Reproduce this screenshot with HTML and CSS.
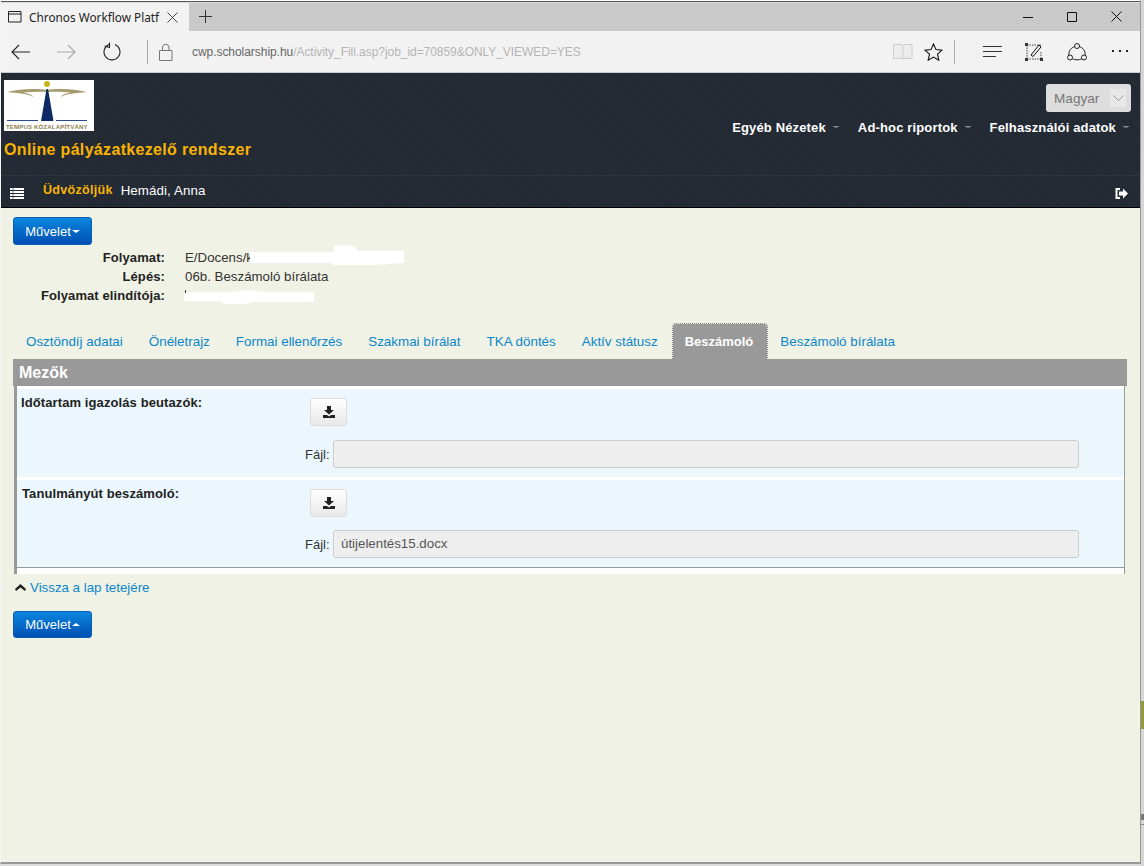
FILE: index.html
```html
<!DOCTYPE html>
<html lang="hu">
<head>
<meta charset="utf-8">
<title>Chronos Workflow Platform</title>
<link rel="stylesheet" href="styles.css">
</head>
<body>
<div class="desktop">
  <div class="window">
    <div class="titlebar">
      <div class="browser-tab">
        <svg class="tab-icon" width="14" height="12" viewBox="0 0 14 12"><path d="M.5.5h12.500v10.500H.5zM.5 3h12.500" fill="none" stroke="#222"/></svg>
        <span class="tab-title">Chronos Workflow Platf</span>
        <svg class="tab-close" width="11" height="11" viewBox="0 0 11 11"><path d="M.5.5l10 10M10.500.5l-10 10" stroke="#444" fill="none"/></svg>
      </div>
      <svg class="new-tab" width="13" height="13" viewBox="0 0 13 13"><path d="M6.500 0v13M0 6.500h13" stroke="#333" fill="none"/></svg>
      <div class="win-controls">
        <svg width="10" height="10" viewBox="0 0 10 10"><path d="M0 5.500h10" stroke="#111"/></svg>
        <svg width="10" height="10" viewBox="0 0 10 10"><path d="M.5.500h9v9h-9z" fill="none" stroke="#111"/></svg>
        <svg width="11" height="11" viewBox="0 0 11 11"><path d="M.5.5l10 10M10.500.5l-10 10" stroke="#111" fill="none"/></svg>
      </div>
    </div>
    <div class="toolbar">
      <svg class="nav-back" width="19" height="16" viewBox="0 0 19 16"><path d="M19 8H1M8 1L1 8l7 7" fill="none" stroke="#222" stroke-width="1.100"/></svg>
      <svg class="nav-forward" width="19" height="16" viewBox="0 0 19 16"><path d="M0 8h18M11 1l7 7-7 7" fill="none" stroke="#aaa" stroke-width="1.100"/></svg>
      <svg class="nav-reload" width="18" height="19" viewBox="0 0 18 19"><path d="M6 2.500A8 8 0 1 0 12 2.500M6.500 0.500L6.500 5.500 1.500 4" fill="none" stroke="#222" stroke-width="1.100"/></svg>
      <span class="tool-sep"></span>
      <svg class="lock" width="14" height="18" viewBox="0 0 14 18"><path d="M.5 7.500h12.500v10H.5zM3.500 7.500V4a3.300 3.300 0 0 1 6.500 0v3.500" fill="none" stroke="#777"/></svg>
      <span class="address"><span class="domain">cwp.scholarship.hu</span>/Activity_Fill.asp?job_id=70859&amp;ONLY_VIEWED=YES</span>
      <svg class="reading" width="20" height="18" viewBox="0 0 20 18"><path d="M.5 1.500h8.500l1 1 1-1h8v14h-8l-1 1-1-1H.5zM10 2.500v13" fill="#ececec" stroke="#ccc"/></svg>
      <svg class="star" width="19" height="18" viewBox="0 0 19 18"><path d="M9.500 1l2.500 5.600 6 .6-4.500 4 1.300 6-5.300-3.100-5.300 3.100 1.300-6-4.500-4 6-.6z" fill="none" stroke="#111" stroke-width="1.100"/></svg>
      <span class="tool-sep tool-sep-right"></span>
      <svg class="hub" width="19" height="11" viewBox="0 0 19 11"><path d="M0 .5h19M0 5.500h19M0 10.500h13" fill="none" stroke="#333"/></svg>
      <svg class="note" width="18" height="18" viewBox="0 0 18 18"><path d="M2 2h14M2 2v14M2 16h14M16 9v7" stroke="#444" stroke-dasharray="1.500 1" fill="none"/><path d="M0 0h3v3H0zM15 15h3v3h-3zM0 15h3v3H0z" fill="#333"/><path d="M6 12L14 2l2 2-8 9.500z" fill="none" stroke="#111"/></svg>
      <svg class="share" width="20" height="18" viewBox="0 0 20 18"><circle cx="10" cy="3" r="2.500" fill="none" stroke="#222"/><circle cx="3" cy="14.500" r="2.500" fill="none" stroke="#222"/><circle cx="17" cy="14.500" r="2.500" fill="none" stroke="#222"/><path d="M7.600 3.700C4 4.600 1.500 8 1.800 12.200M12.400 3.700C16 4.600 18.500 8 18.200 12.200M5.300 15.800c3 1.400 6.400 1.400 9.400 0" fill="none" stroke="#222"/></svg>
      <svg class="more" width="17" height="3" viewBox="0 0 17 3"><path d="M0 0h2v2H0zM7 0h2v2H7zM14 0h2v2h-2z" fill="#222"/></svg>
    </div>
    <header class="site-header">
      <div class="brand-row">
        <div class="brand">
          <div class="logo">
            <svg width="90" height="51" viewBox="0 0 90 51">
              <circle cx="43" cy="4" r="3" fill="#c3b41b"/>
              <path d="M3 12c12-3 28-4 40-2 12-2 28-1 40 2-11 1-22 2-26 5 1-3 6-3.500 10-4.500-9-1-18-1-24-.5-7-.5-15-.5-24 .5 4 1 9 1.500 10 4.500-4-3-15-4-26-5z" fill="#a59a6b"/>
              <path d="M42.500 9h1.500l5.500 32H37z" fill="#0e2a66"/>
              <path d="M3 40.500h31M52 40.500h31" stroke="#2a4a8a"/>
              <text x="2" y="49" class="logo-text">TEMPUS KÖZALAPÍTVÁNY</text>
            </svg>
          </div>
          <div class="system-name">Online pályázatkezelő rendszer</div>
        </div>
        <div class="header-right">
          <div class="lang-select"><span>Magyar</span><span class="lang-arrow"><svg width="11" height="6" viewBox="0 0 11 6"><path d="M.5.500l5 5 5-5" fill="none" stroke="#999"/></svg></span></div>
          <nav class="top-nav">
            <a>Egyéb Nézetek<i class="caret"></i></a>
            <a>Ad-hoc riportok<i class="caret"></i></a>
            <a>Felhasználói adatok<i class="caret"></i></a>
          </nav>
        </div>
      </div>
      <div class="user-row">
        <svg class="list-icon" width="14" height="11" viewBox="0 0 14 11"><path d="M0 0h14v2H0zM0 3h14v2H0zM0 6h14v2H0zM0 9h14v2H0z" fill="#fff"/><path d="M3 0v11" stroke="#222933" stroke-width=".6"/></svg>
        <span class="welcome">Üdvözöljük</span>
        <span class="user-name">Hemádi, Anna</span>
        <svg class="logout" width="13" height="11" viewBox="0 0 13 11"><path d="M5 1H1.500v9H5" fill="none" stroke="#fff" stroke-width="2"/><path d="M4 3.500h4V0.500l5 5-5 5v-3H4z" fill="#fff"/></svg>
      </div>
    </header>
    <main class="content">
      <button class="action-btn action-btn-top">Művelet<i class="btn-caret"></i></button>
      <dl class="meta">
        <dt>Folyamat:</dt><dd class="redacted-cell">E/Docens/k<svg class="redact redact-a" width="154" height="24" viewBox="0 0 154 24"><path d="M0 9h84V3c6-1 14-1 20 0l4 5h46v12l-30 2H84l-4-2H0z" fill="#fff"/></svg></dd>
        <dt>Lépés:</dt><dd>06b. Beszámoló bírálata</dd>
        <dt>Folyamat elindítója:</dt><dd class="redacted-cell"><svg class="redact redact-b" width="130" height="15" viewBox="0 0 130 15"><path d="M0 3h48c10-2 22-2 32 0h50v10H70l-10 2H40l-4-3H0z" fill="#fff"/><path d="M1 1h1v3H1z" fill="#333"/></svg></dd>
      </dl>
      <nav class="tabs">
        <a>Osztöndíj adatai</a>
        <a>Önéletrajz</a>
        <a>Formai ellenőrzés</a>
        <a>Szakmai bírálat</a>
        <a>TKA döntés</a>
        <a>Aktív státusz</a>
        <a class="tab-active">Beszámoló</a>
        <a>Beszámoló bírálata</a>
      </nav>
      <section class="panel">
        <h2 class="panel-head">Mezők</h2>
        <div class="panel-body">
          <div class="field">
            <div class="field-label">Időtartam igazolás beutazók:</div>
            <div class="field-main">
              <button class="dl-btn"><svg width="12" height="12" viewBox="0 0 12 12"><path d="M4 0h4v4h3L6 8.500 1 4h3zM0 9h4l2 1.500L8 9h4v3H0z" fill="#222"/></svg></button>
              <div class="file-row"><label>Fájl:</label><div class="file-input"></div></div>
            </div>
          </div>
          <div class="field field-last">
            <div class="field-label">Tanulmányút beszámoló:</div>
            <div class="field-main">
              <button class="dl-btn"><svg width="12" height="12" viewBox="0 0 12 12"><path d="M4 0h4v4h3L6 8.500 1 4h3zM0 9h4l2 1.500L8 9h4v3H0z" fill="#222"/></svg></button>
              <div class="file-row"><label>Fájl:</label><div class="file-input">útijelentés15.docx</div></div>
            </div>
          </div>
        </div>
      </section>
      <a class="back-top"><svg width="11" height="7" viewBox="0 0 11 7"><path d="M5.500 0L11 5l-1 2-4.500-3.500L1 7 0 5z" fill="#222"/></svg>Vissza a lap tetejére</a>
      <button class="action-btn action-btn-bottom">Művelet<i class="btn-caret btn-caret-up"></i></button>
    </main>
  </div>
  <div class="side-strip">
    <span class="strip-olive"></span>
    <span class="strip-dark"></span>
    <span class="strip-line"></span>
  </div>
</div>
</body>
</html>
```
FILE: styles.css
```css
* { box-sizing: border-box; }
html, body { margin: 0; padding: 0; height: 100%; overflow: hidden; }
body { background: #dcdcdc; font-family: "Liberation Sans", Arial, sans-serif; font-size: 13.300px; color: #333; }

.desktop { display: flex; height: 866px; }
.window {
  width: 1141px; height: 864px; display: flex; flex-direction: column;
  border-top: 1px solid #fff; box-shadow: inset 0 1px 0 #555; border-left: 1px solid #f5f5f5;
  border-right: 1px solid #999; border-bottom: 2px solid #999; padding-top: 2px;
}
.side-strip { flex: 1; position: relative; background: #d6d6d6; }
.strip-olive, .strip-dark, .strip-line { position: absolute; left: 0; right: 0; }
.strip-olive { top: 701px; height: 28px; background: #94983a; }
.strip-dark { top: 814px; height: 6px; background: #777; }
.strip-line { top: 824px; height: 1px; background: #889; }

.titlebar { height: 28px; background: #c9c9c9; display: flex; align-items: center; flex: none; padding-bottom: 1px; }
.browser-tab { width: 188px; height: 28px; margin-bottom: -1px; background: #f2f2f2; display: flex; align-items: center; padding-left: 7px; }
.tab-icon { flex: none; }
.tab-title { font-family: "Noto Sans", sans-serif; font-size: 11.800px; color: #222; margin-left: 7px; width: 138px; white-space: nowrap; }
.tab-close { flex: none; }
.new-tab { margin-left: 10px; }
.win-controls { margin-left: auto; display: flex; align-items: center; gap: 34px; padding-right: 18px; }

.toolbar { height: 42px; background: #f2f2f2; border-bottom: 1px solid #ccc; display: flex; align-items: center; flex: none; position: relative; }
.nav-back { margin-left: 10px; }
.nav-forward { margin-left: 27px; }
.nav-reload { margin-left: 27px; }
.tool-sep { width: 1px; height: 24px; background: #aaa; margin-left: 26px; }
.lock { margin-left: 11px; }
.address { margin-left: 19px; font-size: 12px; letter-spacing: -.05px; color: #b5b5b5; white-space: nowrap; width: 704px; }
.domain { color: #666; }
.reading { margin-left: -3px; }
.star { margin-left: 11px; }
.tool-sep-right { margin-left: 11px; }
.hub { margin-left: 28px; }
.note { margin-left: 23px; }
.share { margin-left: 24px; }
.more { margin-left: 25px; }

.site-header {
  height: 135px; flex: none; border-bottom: 1px solid #000; display: flex; flex-direction: column;
  background-color: #222933;
  background-image: repeating-linear-gradient(45deg, rgba(255,255,255,.025) 0 1px, transparent 1px 3px);
}
.brand-row { height: 103px; display: flex; justify-content: space-between; border-bottom: 1px solid #30343b; padding: 7px 0 0 3px; }
.logo { width: 90px; height: 51px; background: #fff; }
.logo svg { display: block; }
.logo-text { font: 700 6px "Liberation Sans", sans-serif; fill: #8a7d4a; letter-spacing: .2px; }
.system-name { color: #fab400; font-size: 16px; font-weight: 700; margin-top: 10px; line-height: 18px; letter-spacing: .33px; }
.header-right { display: flex; flex-direction: column; align-items: flex-end; padding-right: 9px; }
.lang-select { width: 85px; height: 28px; margin-top: 4px; background: #ddd; border-radius: 3px; color: #777; font-size: 13.600px; display: flex; align-items: center; justify-content: space-between; padding: 0 5px 0 8px; }
.lang-arrow { width: 16px; height: 18px; background: #e8e8e8; display: flex; align-items: center; justify-content: center; }
.top-nav { display: flex; gap: 18px; margin-top: 6px; margin-right: 1px; }
.top-nav a { color: #fff; font-weight: 700; font-size: 13px; display: flex; align-items: center; white-space: nowrap; letter-spacing: .15px; height: 18px; }
.caret { display: inline-block; width: 0; height: 0; margin-left: 6px; border: 4px solid transparent; border-top: 2px solid #888; border-bottom: 0; }
.user-row { flex: 1; display: flex; align-items: center; padding: 0 12px 0 9px; position: relative; }
.list-icon { margin-top: 4px; }
.welcome { color: #fab400; font-weight: 700; margin-left: 19px; font-size: 12.500px; letter-spacing: .3px; margin-top: -3px; }
.user-name { color: #fff; margin-left: 8px; margin-top: -3px; letter-spacing: .1px; }
.logout { margin-left: auto; margin-top: 4px; }

.content { flex: 1; background: #f1f2e6; padding: 9px 12px 0 12px; display: flex; flex-direction: column; align-items: flex-start; }
.action-btn {
  width: 79px; height: 28px; padding: 0; border: 1px solid #0a5fb5; border-radius: 3px;
  background: linear-gradient(#0a86de, #004fb4); color: #fff; font: 13px "Liberation Sans", sans-serif;
  display: flex; align-items: center; justify-content: center;
}
.btn-caret { display: inline-block; width: 0; height: 0; margin-left: 1px; border: 4px solid transparent; border-top: 3px solid #fff; border-bottom: 0; }
.btn-caret-up { border-top: 0; border-bottom: 3px solid #fff; }

.meta { display: grid; grid-template-columns: 152px 1fr; column-gap: 20px; row-gap: 3px; margin: 5px 0 0; align-self: stretch; line-height: 16px; }
.meta dt { font-size: 13px; font-weight: 700; text-align: right; color: #222; letter-spacing: .1px; }
.meta dd { margin: 0; color: #333; }
.redacted-cell { position: relative; min-height: 16px; }
.redact { position: absolute; }
.redact-a { left: 65px; top: -7px; }
.redact-b { left: -1px; top: 1px; }

.tabs { display: flex; margin-top: 20px; height: 35px; align-self: stretch; }
.tabs a { color: #0b87c9; font-size: 13.400px; padding: 0 13px; line-height: 35px; white-space: nowrap; }
.tabs a.tab-active {
  background: #999; color: #fff; font-weight: 700; font-size: 13px; border-radius: 3px 3px 0 0;
  outline: 1px dotted #888; margin-left: 2px; padding: 0 14px 0 12px;
}

.panel { width: 1114px; flex: none; }
.panel-head { margin: 0; height: 27px; background: #999; color: #fff; font-size: 16px; font-weight: 700; line-height: 27px; padding-left: 6px; }
.panel-body { background: #fff; margin: 0 2px 0 1px; padding: 3px 0 6px; border-left: 3px solid #999; border-right: 1px solid #999; }
.field { display: flex; height: 88px; background: #ebf7fd; }
.field-last { margin-top: 3px; border-bottom: 1px solid #999; }
.field-last .field-label { padding-left: 5px; }
.field-label { width: 293px; font-size: 13px; font-weight: 700; color: #222; padding: 6px 0 0 4px; letter-spacing: .1px; }
.field-main { flex: 1; display: flex; flex-direction: column; align-items: flex-start; padding-top: 9px; }
.dl-btn { width: 37px; height: 28px; padding: 0; border: 1px solid #ddd; border-radius: 3px; background: linear-gradient(#fff, #e8e8e8); display: flex; align-items: center; justify-content: center; }
.file-row { display: flex; align-items: center; margin-top: 14px; margin-left: -5px; }
.field-last .file-row { margin-top: 13px; }
.file-row label { width: 28px; font-size: 13px; color: #333; }
.file-input { width: 746px; height: 28px; background: #eee; border: 1px solid #ccc; border-radius: 3px; color: #555; padding-left: 7px; line-height: 26px; }

.back-top { margin-top: 4px; margin-left: 2px; color: #0b87c9; display: flex; align-items: center; gap: 4px; height: 18px; }
.action-btn-bottom { margin-top: 15px; height: 27px; }
```
